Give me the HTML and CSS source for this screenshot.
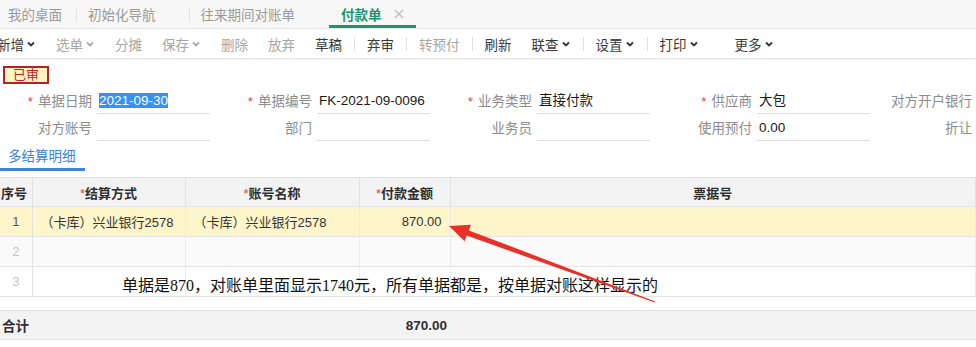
FILE: index.html
```html
<!DOCTYPE html>
<html lang="zh-CN">
<head>
    <meta charset="UTF-8">
    <meta name="viewport" content="width=device-width, initial-scale=1.0">
    <title>付款单</title>
    <link rel="stylesheet" href="styles.css">
</head>
<body>
    <div class="tabs">
        <div class="tab tab-home sep">我的桌面</div>
        <div class="tab sep">初始化导航<span class="tab-close"></span></div>
        <div class="tab">往来期间对账单<span class="tab-close"></span></div>
        <div class="tab active">付款单<span class="tab-close">
            <svg width="10" height="10" viewBox="0 0 10 10"><path d="M1 1 L9 9 M9 1 L1 9" stroke="#bdbdbd" stroke-width="1.3"/></svg>
        </span></div>
    </div>

    <div class="toolbar">
        <div class="tool first">新增<svg class="chev" viewBox="0 0 8 6"><path d="M1 1.5 L4 4.5 L7 1.5" /></svg></div>
        <div class="tool off">选单<svg class="chev" viewBox="0 0 8 6"><path d="M1 1.5 L4 4.5 L7 1.5" /></svg></div>
        <div class="tool off">分摊</div>
        <div class="tool off">保存<svg class="chev" viewBox="0 0 8 6"><path d="M1 1.5 L4 4.5 L7 1.5" /></svg></div>
        <div class="tool off">删除</div>
        <div class="tool off">放弃</div>
        <div class="tool">草稿</div>
        <span class="tool-sep"></span>
        <div class="tool">弃审</div>
        <span class="tool-sep"></span>
        <div class="tool off">转预付</div>
        <span class="tool-sep"></span>
        <div class="tool">刷新</div>
        <div class="tool">联查<svg class="chev" viewBox="0 0 8 6"><path d="M1 1.5 L4 4.5 L7 1.5" /></svg></div>
        <span class="tool-sep"></span>
        <div class="tool">设置<svg class="chev" viewBox="0 0 8 6"><path d="M1 1.5 L4 4.5 L7 1.5" /></svg></div>
        <span class="tool-sep"></span>
        <div class="tool">打印<svg class="chev" viewBox="0 0 8 6"><path d="M1 1.5 L4 4.5 L7 1.5" /></svg></div>
        <div class="tool wide">更多<svg class="chev" viewBox="0 0 8 6"><path d="M1 1.5 L4 4.5 L7 1.5" /></svg></div>
    </div>

    <div class="status">
        <span class="badge">已审</span>
    </div>

    <div class="form">
        <div class="field">
            <label><i>*</i>单据日期</label>
            <div class="input"><span class="selected">2021-09-30</span></div>
        </div>
        <div class="field">
            <label><i>*</i>单据编号</label>
            <div class="input">FK-2021-09-0096</div>
        </div>
        <div class="field">
            <label><i>*</i>业务类型</label>
            <div class="input">直接付款</div>
        </div>
        <div class="field">
            <label><i>*</i>供应商</label>
            <div class="input">大包</div>
        </div>
        <div class="field">
            <label>对方开户银行</label>
            <div class="input"></div>
        </div>

        <div class="field">
            <label>对方账号</label>
            <div class="input"></div>
        </div>
        <div class="field">
            <label>部门</label>
            <div class="input"></div>
        </div>
        <div class="field">
            <label>业务员</label>
            <div class="input"></div>
        </div>
        <div class="field">
            <label>使用预付</label>
            <div class="input">0.00</div>
        </div>
        <div class="field">
            <label>折让</label>
            <div class="input"></div>
        </div>
    </div>

    <div class="subtabs">
        <span class="subtab active">多结算明细</span>
    </div>

    <table class="detail">
        <colgroup>
            <col style="width: 32px">
            <col style="width: 153px">
            <col style="width: 174px">
            <col style="width: 91px">
            <col>
        </colgroup>
        <thead>
            <tr>
                <th class="seq">序号</th>
                <th><i>*</i>结算方式</th>
                <th><i>*</i>账号名称</th>
                <th><i>*</i>付款金额</th>
                <th>票据号</th>
            </tr>
        </thead>
        <tbody>
            <tr class="current">
                <td class="seq">1</td>
                <td>（卡库）兴业银行2578</td>
                <td>（卡库）兴业银行2578</td>
                <td class="num">870.00</td>
                <td></td>
            </tr>
            <tr class="alt">
                <td class="seq">2</td>
                <td></td>
                <td></td>
                <td></td>
                <td></td>
            </tr>
            <tr>
                <td class="seq">3</td>
                <td></td>
                <td></td>
                <td></td>
                <td></td>
            </tr>
        </tbody>
    </table>

    <div class="total">
        <span class="total-label">合计</span>
        <span class="total-amount">870.00</span>
    </div>

    <!-- annotation laid over the grid -->
    <div class="note">单据是870，对账单里面显示1740元，所有单据都是，按单据对账这样显示的</div>
    <svg class="arrow" width="976" height="347" viewBox="0 0 976 347">
        <polygon points="449,226 471,224.8 468.9,230.4 655.3,301.4 654.7,302.6 466.7,235.5 464.6,241.2" fill="#e8312b"/>
    </svg>
</body>
</html>
```

FILE: styles.css
```css
:root {
    --line: #e4e4e4;
    --muted: #9a9a9a;
    --text: #333333;
    --green: #1f9470;
    --blue: #3f82d9;
    --star: #e0433a;
}

body {
    margin: 0;
    width: 976px;
    height: 347px;
    overflow: hidden;
    position: relative;
    background: #ffffff;
    color: var(--text);
    font-family: "Liberation Sans", "Noto Sans CJK SC", sans-serif;
    font-size: 13px;
}

i {
    font-style: normal;
    color: var(--star);
}

/* top page tabs */
.tabs {
    display: flex;
    height: 28px;
    background: #f7f7f7;
    border-bottom: 1px solid var(--line);
}

.tab {
    position: relative;
    display: flex;
    align-items: center;
    padding: 0 12px 0 11px;
    font-size: 13.5px;
    color: var(--muted);
    box-sizing: border-box;
}

.tab.tab-home {
    padding: 0 15px 0 8px;
}

.tab.sep::after {
    content: "";
    position: absolute;
    right: 0;
    top: 7px;
    height: 15px;
    border-right: 1px solid #e2e2e2;
}

.tab-close {
    display: inline-flex;
    width: 10px;
    margin-left: 12px;
    visibility: hidden;
}

.tab.active {
    color: var(--green);
    font-weight: bold;
    padding-left: 12px;
    border-bottom: 3px solid var(--green);
    padding-top: 3px;
}

.tab.active .tab-close {
    visibility: visible;
}

/* action toolbar */
.toolbar {
    display: flex;
    align-items: center;
    height: 29px;
    border-bottom: 1px solid var(--line);
    box-shadow: 0 1px 2px rgba(0, 0, 0, 0.04);
}

.tool {
    display: flex;
    align-items: center;
    padding: 0 10px;
    font-size: 13.5px;
    color: #3a3a3a;
    white-space: nowrap;
}

.tool.first {
    margin-left: -13px;
}

.tool.off {
    color: #a6a6a6;
}

.tool.wide {
    margin-left: 16px;
}

.chev {
    width: 8px;
    height: 6px;
    margin-left: 3px;
    margin-right: 1px;
    fill: none;
    stroke: currentColor;
    stroke-width: 1.8;
}

.tool:not(.off) .chev {
    stroke: #333;
}

.tool-sep {
    width: 1px;
    height: 14px;
    margin: 0 2px;
    background: #e0e0e0;
}

/* status badge */
.status {
    padding: 7px 0 0 3px;
    height: 18px;
}

.badge {
    display: inline-block;
    box-sizing: border-box;
    width: 46px;
    height: 18px;
    line-height: 14px;
    text-align: center;
    border: 2px solid #b42323;
    background: #fff4c4;
    color: #c62020;
    font-size: 13px;
}

/* header form */
.form {
    display: grid;
    grid-template-columns: repeat(5, 220px);
    row-gap: 1px;
    margin-top: 4px;
}

.field {
    display: flex;
    align-items: flex-end;
    height: 26px;
}

.field label {
    width: 92px;
    text-align: right;
    color: #8c8c8c;
    font-size: 13.5px;
    line-height: 24px;
    margin-right: 5px;
    white-space: nowrap;
}

.field label i {
    margin-right: 5px;
}

.input {
    width: 113px;
    height: 25px;
    line-height: 24px;
    border-bottom: 1px solid #dedede;
    padding-left: 2px;
    box-sizing: border-box;
    color: #1a1a1a;
    font-size: 13.5px;
    white-space: nowrap;
}

.selected {
    background: #3390ff;
    color: #ffffff;
}

/* detail tabs */
.subtabs {
    display: flex;
    height: 30px;
}

.subtab {
    padding: 4px 9px 0 8px;
    line-height: 24px;
    font-size: 13.5px;
    color: var(--blue);
}

.subtab.active {
    border-bottom: 3px solid var(--blue);
}

/* detail grid */
.detail {
    margin-top: 6px;
    width: 976px;
    border-collapse: collapse;
    table-layout: fixed;
    font-size: 13px;
}

.detail th {
    height: 28px;
    padding: 0;
    background: #f3f3f3;
    border-top: 1px solid var(--line);
    border-bottom: 1px solid var(--line);
    border-right: 1px solid #e2e2e2;
    color: #2e2e2e;
    font-weight: bold;
    text-align: center;
}

.detail th i {
    font-weight: normal;
}

.detail th.seq {
    text-align: left;
    padding-left: 1px;
}

.detail td {
    height: 29px;
    padding: 0 8px;
    border-bottom: 1px solid var(--line);
    border-right: 1px solid #ececec;
    color: #333333;
    white-space: nowrap;
    overflow: hidden;
}

.detail td.seq {
    padding: 0;
    text-align: center;
    color: #c4c4c4;
    border-right-color: #e2e2e2;
}

.detail tr.current td {
    background: #fff5cb;
}

.detail tr.current td.seq {
    color: #555555;
}

.detail tr.alt td {
    background: #fafafa;
}

.detail td.num {
    text-align: right;
}

.total {
    display: grid;
    grid-template-columns: 359px 88px;
    align-items: center;
    margin-top: 13px;
    height: 28px;
    background: #f3f3f3;
    border-top: 1px solid var(--line);
    border-bottom: 1px solid var(--line);
    font-weight: bold;
    font-size: 13.5px;
    color: #2e2e2e;
}

.total-label {
    padding-left: 2px;
}

.total-amount {
    text-align: right;
}

/* annotation */
.note {
    position: absolute;
    left: 122px;
    top: 275px;
    font-family: "Liberation Serif", "Noto Sans CJK SC", serif;
    font-size: 16px;
    line-height: 22px;
    color: #111111;
    white-space: nowrap;
}

.arrow {
    position: absolute;
    left: 0;
    top: 0;
    pointer-events: none;
}
```
